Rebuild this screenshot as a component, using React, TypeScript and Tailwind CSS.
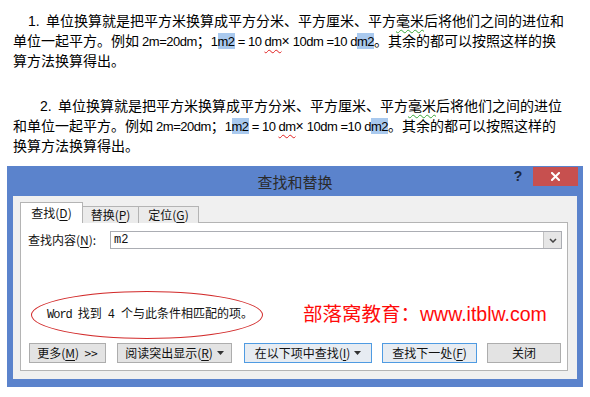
import React from "react";

function Hl({ children }: { children: React.ReactNode }) {
  return <span className="bg-[#a9c9ee]">{children}</span>;
}

function Wavy({ children, green }: { children: React.ReactNode; green?: boolean }) {
  return (
    <span
      className={
        green
          ? "underline decoration-wavy decoration-[#3aa63a] decoration-1 underline-offset-[3px]"
          : "underline decoration-wavy decoration-[#e02020] decoration-1 underline-offset-[3px]"
      }
    >
      {children}
    </span>
  );
}

function Lat({ children }: { children: React.ReactNode }) {
  return <span className="text-[13px] tracking-[-0.5px]">{children}</span>;
}

function FormulaLine({ head, tail }: { head: string; tail: string }) {
  return (
    <div className="pl-[13px] h-[20px] whitespace-nowrap">
      {head}
      <Lat> 2m=20dm</Lat>；<Lat>1</Lat>
      <Hl>
        <Lat>m2</Lat>
      </Hl>
      <Lat> = 10 </Lat>
      <Lat>
        <Wavy>dm</Wavy>
      </Lat>
      ×<Lat> 10dm =10 d</Lat>
      <Hl>
        <Lat>m2</Lat>
      </Hl>
      {tail}
    </div>
  );
}

function Key({ children }: { children: React.ReactNode }) {
  return <span className="underline underline-offset-[2px]">{children}</span>;
}

function Caret() {
  return (
    <svg width="7" height="4" viewBox="0 0 7 4" className="ml-[4px] inline-block">
      <path d="M0 0h7L3.5 4z" fill="#333" />
    </svg>
  );
}

function Btn({
  children,
  w,
  ml,
  blue,
}: {
  children: React.ReactNode;
  w: string;
  ml: string;
  blue?: boolean;
}) {
  return (
    <div
      className={
        "h-[20px] flex items-center justify-center border text-[12px] text-[#111] " +
        w +
        " " +
        ml +
        (blue ? " border-[#4f9be2] bg-[#e7ecf2]" : " border-[#adadad] bg-[#e3e3e3]")
      }
    >
      {children}
    </div>
  );
}

export default function App() {
  return (
    <div className="w-[590px] h-[397px] bg-white overflow-hidden font-['Liberation_Sans','Noto_Sans_CJK_SC',sans-serif] text-black">
      {/* document text */}
      <div className="pt-[11px] text-[14px] leading-[20px]">
        <div className="pl-[28px] h-[20px] whitespace-nowrap">
          <span className="inline-block w-[18px]">1.</span>
          单位换算就是把平方米换算成平方分米、平方厘米、平方
          <Wavy green>毫米</Wavy>后将他们之间的进位和
        </div>
        <FormulaLine head="单位一起平方。例如" tail="。其余的都可以按照这样的换" />
        <div className="pl-[13px] h-[20px]">算方法换算得出。</div>

        <div className="mt-[25px] pl-[40px] h-[20px] whitespace-nowrap">
          <span className="inline-block w-[18px]">2.</span>
          单位换算就是把平方米换算成平方分米、平方厘米、平方
          <Wavy green>毫米</Wavy>后将他们之间的进位
        </div>
        <FormulaLine head="和单位一起平方。例如" tail="。其余的都可以按照这样的" />
        <div className="pl-[13px] h-[20px]">换算方法换算得出。</div>
      </div>

      {/* dialog */}
      <div className="ml-[7px] mt-[10px] w-[576px] bg-[#5b83cc] px-[6px] pb-[8px] font-['Noto_Sans_CJK_SC',sans-serif]">
        <div className="h-[30px] grid grid-cols-[1fr_auto_1fr] items-center">
          <div />
          <div className="text-[15px] text-[#2a2a2a] leading-none">查找和替换</div>
          <div className="flex justify-end self-start pt-[1px] -mr-[1px]">
            <div className="w-[20px] h-[19px] mr-[5px] flex items-center justify-center text-[14px] font-bold text-[#1b2840] font-['Liberation_Sans',sans-serif]">
              ?
            </div>
            <div className="w-[45px] h-[19px] bg-[#c7504f] flex items-center justify-center">
              <svg width="9" height="9" viewBox="0 0 9 9">
                <path d="M1 1l7 7M8 1L1 8" stroke="#fff" strokeWidth="2" strokeLinecap="square" />
              </svg>
            </div>
          </div>
        </div>

        <div className="bg-[#f0f0f0] pt-[7px] pl-[7px] pr-[9px] pb-[8px] text-[12px] text-[#111]">
          {/* tabs */}
          <div className="flex items-end h-[20px] -mb-px relative z-10">
            <div className="w-[63px] h-[21px] bg-white border border-b-0 border-[#b4b4b4] flex items-center justify-center pb-[1px]">
              查找(<Key>D</Key>)
            </div>
            <div className="-ml-px w-[57px] h-[17px] bg-[#ebebeb] border border-b-0 border-[#b4b4b4] flex items-center justify-center">
              替换(<Key>P</Key>)
            </div>
            <div className="-ml-px w-[61px] h-[17px] bg-[#ebebeb] border border-b-0 border-[#b4b4b4] flex items-center justify-center">
              定位(<Key>G</Key>)
            </div>
          </div>

          {/* panel */}
          <div className="border border-[#b4b4b4] bg-white pt-[8px] pr-[5px] pb-[7px]">
            <div className="flex items-center h-[18px]">
              <div className="w-[89px] pl-[7px] whitespace-nowrap">
                查找内容(<Key>N</Key>):
              </div>
              <div className="flex-1 h-[18px] border border-[#abadb3] flex items-stretch">
                <div className="flex-1 pl-[3px] flex items-center font-['Liberation_Mono',monospace] text-[12px]">
                  m2
                </div>
                <div className="w-[18px] bg-[#e6e6e6] border-l border-[#c2c2c2] flex items-center justify-center">
                  <svg width="8" height="5" viewBox="0 0 8 5">
                    <path d="M1 1l3 3 3-3" fill="none" stroke="#444" strokeWidth="1.5" />
                  </svg>
                </div>
              </div>
            </div>

            <div className="flex items-center mt-[42px]">
              <div className="ml-[10px] w-[232px] h-[48px] rounded-[50%] border border-[#d22a2a] flex items-center pl-[15px] whitespace-nowrap font-['Liberation_Mono','Noto_Sans_CJK_SC',monospace] text-[12px] text-[#111]">
                <span className="tracking-[-1px]">Word</span>
                <span className="text-[10px]">&nbsp;</span>找到
                <span className="text-[10px]">&nbsp;</span>4
                <span className="text-[10px]">&nbsp;</span>个与此条件相匹配的项。
              </div>
              <div className="ml-[40px] text-[19.5px] leading-none text-[#ff0a0a] font-['Liberation_Sans','Noto_Sans_CJK_SC',sans-serif] whitespace-nowrap">
                部落窝教育：www.itblw.com
              </div>
            </div>

            <div className="flex mt-[4px]">
              <Btn w="w-[77px]" ml="ml-[8px]">
                更多(<Key>M</Key>)&nbsp;&nbsp;&gt;&gt;
              </Btn>
              <Btn w="w-[115px]" ml="ml-[11px]">
                阅读突出显示(<Key>R</Key>)
                <Caret />
              </Btn>
              <Btn w="w-[128px]" ml="ml-[12px]" blue>
                在以下项中查找(<Key>I</Key>)
                <Caret />
              </Btn>
              <Btn w="w-[95px]" ml="ml-[10px]" blue>
                查找下一处(<Key>F</Key>)
              </Btn>
              <Btn w="w-[74px]" ml="ml-[10px]">
                关闭
              </Btn>
            </div>
          </div>
        </div>
      </div>
    </div>
  );
}
